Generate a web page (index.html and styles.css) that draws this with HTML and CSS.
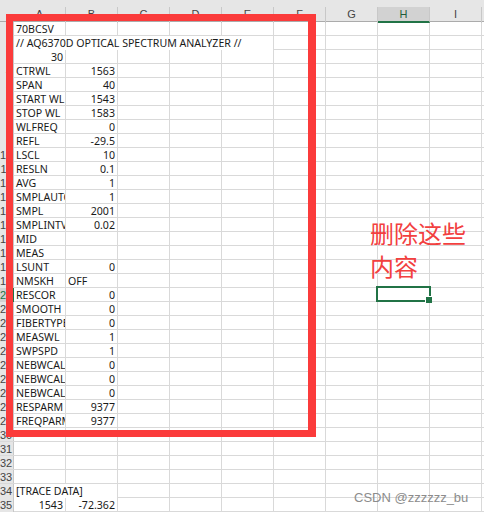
FILE: index.html
```html
<!DOCTYPE html>
<html lang="zh-CN">
  <head>
    <meta charset="UTF-8" />
    <title>70BCSV</title>
    <link rel="stylesheet" href="styles.css">
  </head>
  <body>
    <div class="sheet">
      <div class="head">
        <span class="corner"></span>
        <span class="col">A</span>
        <span class="col">B</span>
        <span class="col">C</span>
        <span class="col">D</span>
        <span class="col">E</span>
        <span class="col">F</span>
        <span class="col">G</span>
        <span class="col on">H</span>
        <span class="col">I</span>
        <span class="col"></span>
      </div>

      <div class="row"><span class="rh">1</span><span class="c a">70BCSV</span></div>
      <div class="row"><span class="rh">2</span><span class="c a wide">// AQ6370D OPTICAL SPECTRUM ANALYZER //</span></div>
      <div class="row"><span class="rh">3</span><span class="c a num">30</span></div>
      <div class="row"><span class="rh">4</span><span class="c a">CTRWL</span><span class="c b num">1563</span></div>
      <div class="row"><span class="rh">5</span><span class="c a">SPAN</span><span class="c b num">40</span></div>
      <div class="row"><span class="rh">6</span><span class="c a">START WL</span><span class="c b num">1543</span></div>
      <div class="row"><span class="rh">7</span><span class="c a">STOP WL</span><span class="c b num">1583</span></div>
      <div class="row"><span class="rh">8</span><span class="c a">WLFREQ</span><span class="c b num">0</span></div>
      <div class="row"><span class="rh">9</span><span class="c a">REFL</span><span class="c b num">-29.5</span></div>
      <div class="row"><span class="rh">10</span><span class="c a">LSCL</span><span class="c b num">10</span></div>
      <div class="row"><span class="rh">11</span><span class="c a">RESLN</span><span class="c b num">0.1</span></div>
      <div class="row"><span class="rh">12</span><span class="c a">AVG</span><span class="c b num">1</span></div>
      <div class="row"><span class="rh">13</span><span class="c a">SMPLAUTO</span><span class="c b num">1</span></div>
      <div class="row"><span class="rh">14</span><span class="c a">SMPL</span><span class="c b num">2001</span></div>
      <div class="row"><span class="rh">15</span><span class="c a">SMPLINTV</span><span class="c b num">0.02</span></div>
      <div class="row"><span class="rh">16</span><span class="c a">MID</span></div>
      <div class="row"><span class="rh">17</span><span class="c a">MEAS</span></div>
      <div class="row"><span class="rh">18</span><span class="c a">LSUNT</span><span class="c b num">0</span></div>
      <div class="row"><span class="rh">19</span><span class="c a">NMSKH</span><span class="c b">OFF</span></div>
      <div class="row"><span class="rh on">20</span><span class="c a">RESCOR</span><span class="c b num">0</span></div>
      <div class="row"><span class="rh">21</span><span class="c a">SMOOTH</span><span class="c b num">0</span></div>
      <div class="row"><span class="rh">22</span><span class="c a">FIBERTYPE</span><span class="c b num">0</span></div>
      <div class="row"><span class="rh">23</span><span class="c a">MEASWL</span><span class="c b num">1</span></div>
      <div class="row"><span class="rh">24</span><span class="c a">SWPSPD</span><span class="c b num">1</span></div>
      <div class="row"><span class="rh">25</span><span class="c a">NEBWCALC</span><span class="c b num">0</span></div>
      <div class="row"><span class="rh">26</span><span class="c a">NEBWCALB</span><span class="c b num">0</span></div>
      <div class="row"><span class="rh">27</span><span class="c a">NEBWCALA</span><span class="c b num">0</span></div>
      <div class="row"><span class="rh">28</span><span class="c a">RESPARM</span><span class="c b num">9377</span></div>
      <div class="row"><span class="rh">29</span><span class="c a">FREQPARM</span><span class="c b num">9377</span></div>
      <div class="row"><span class="rh">30</span></div>
      <div class="row"><span class="rh">31</span></div>
      <div class="row"><span class="rh">32</span></div>
      <div class="row"><span class="rh">33</span></div>
      <div class="row"><span class="rh">34</span><span class="c a wide2">[TRACE DATA]</span></div>
      <div class="row"><span class="rh">35</span><span class="c a num">1543</span><span class="c b num">-72.362</span></div>
    </div>

    <!-- annotations drawn over the sheet -->
    <div class="mark"></div>
    <div class="note">删除这些<br />内容</div>
    <div class="pick"></div>
    <div class="credit">CSDN @zzzzzz_bu</div>
  </body>
</html>
```

FILE: styles.css
```css
* {
  box-sizing: border-box;
}
body {
  margin: 0;
  width: 484px;
  height: 512px;
  overflow: hidden;
  position: relative;
  background: #fff;
  font-family: "Liberation Sans", Arial, sans-serif;
}
.sheet {
  width: 484px;
  overflow: hidden;
}
.head,
.row {
  display: grid;
  grid-template-columns: 14px repeat(10, 52px);
}
.head {
  height: 22px;
  background: #e6e6e6;
  border-bottom: 1px solid #ababab;
}
.col {
  margin-top: 7px;
  border-right: 1px solid #c8c8c8;
  text-align: center;
  font-size: 11px;
  line-height: 14px;
  color: #444;
}
.col.on {
  background: #d2d2d2;
  border-bottom: 2px solid #217346;
  color: #1d5e3a;
}
.row {
  height: 14px;
  border-bottom: 1px solid #d9d9d9;
  background-image: linear-gradient(to right, #d9d9d9 1px, transparent 1px);
  background-size: 52px 100%;
  background-position: 13px 0;
}
.rh {
  background: #e6e6e6;
  border-right: 1px solid #c8c8c8;
  padding-right: 1px;
  text-align: right;
  font-size: 11px;
  line-height: 14px;
  color: #444;
  overflow: hidden;
  white-space: nowrap;
}
.rh.on {
  background: #d2d2d2;
  border-right: 2px solid #217346;
  color: #217346;
}
.c {
  margin-right: 1px;
  padding: 0 2px;
  font-family: "Noto Sans", "Liberation Sans", sans-serif;
  font-size: 10.6px;
  line-height: 14px;
  color: #1a1a1a;
  white-space: nowrap;
  overflow-x: clip;
}
.a {
  grid-column: 2;
}
.b {
  grid-column: 3;
}
.num {
  text-align: right;
}
.wide {
  grid-column: 2 / span 5;
  background: #fff;
}
.wide2 {
  grid-column: 2 / span 2;
  background: #fff;
}

/* red frame round the block to remove */
.mark {
  position: absolute;
  left: 6px;
  top: 14px;
  width: 310px;
  height: 423px;
  border: 7px solid #fb3b3b;
  border-right-width: 8px;
}
.note {
  position: absolute;
  left: 370px;
  top: 216px;
  font-family: "Noto Sans CJK SC", sans-serif;
  font-size: 24px;
  line-height: 33px;
  color: #f2403f;
}
/* active cell H20 */
.pick {
  position: absolute;
  left: 376px;
  top: 286px;
  width: 55px;
  height: 16px;
  border: 2px solid #217346;
}
.pick::after {
  content: "";
  position: absolute;
  right: -3px;
  bottom: -3px;
  width: 6px;
  height: 6px;
  background: #217346;
  border-left: 1px solid #fff;
  border-top: 1px solid #fff;
}
.credit {
  position: absolute;
  left: 354px;
  top: 490px;
  font-size: 13px;
  line-height: 15px;
  color: #8c8c8c;
}
```
